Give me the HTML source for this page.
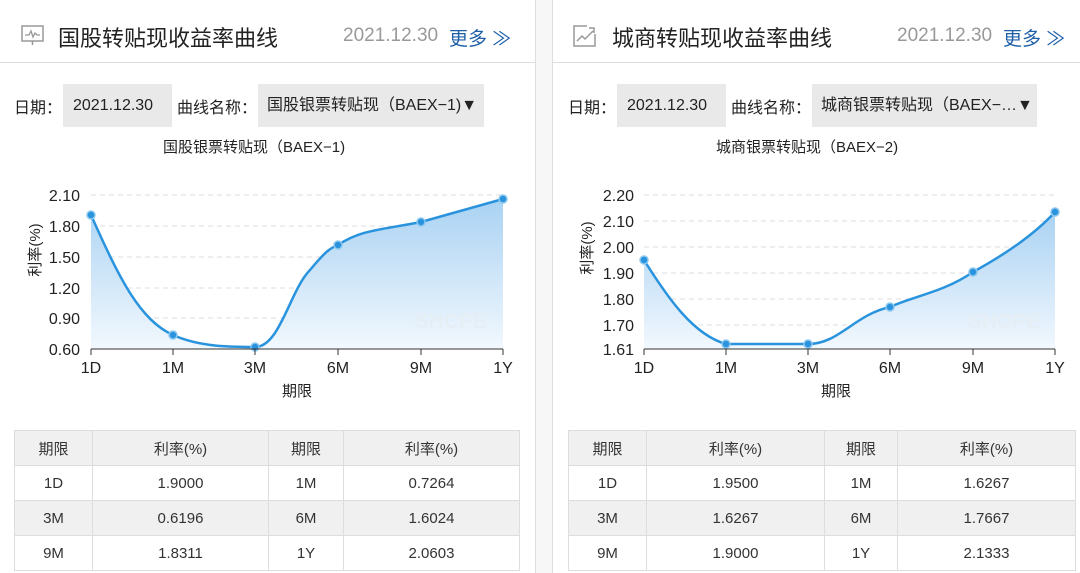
<!DOCTYPE html>
<html><head><meta charset="utf-8"><style>
*{margin:0;padding:0;box-sizing:border-box}
body{width:1080px;height:573px;background:#fff;position:relative;overflow:hidden;font-family:"Liberation Sans","Noto Sans CJK SC",sans-serif;color:#333}
.a{position:absolute;white-space:nowrap}
.title{font-size:22px;color:#222;top:21px}
.date{font-size:19px;color:#999;top:25px}
.more{font-size:19px;color:#1f5fa8;top:24px}
.box{position:absolute;background:#e9e9e9;top:84px;height:43px;font-size:16px;line-height:44px;color:#222}
.lab{font-size:16px;top:94px;color:#222}
table{position:absolute;border-collapse:collapse;font-size:15px;color:#333;top:430px}
td{border:1px solid #ddd;height:35px;text-align:center}
tr.g td{background:#f0f0f0}
</style></head><body>
<div class="a" style="left:535px;top:0;width:18px;height:573px;background:#f7f7f7;border-left:1px solid #ddd;border-right:1px solid #ddd"></div>
<div class="a" style="left:0;top:62px;width:535px;height:1px;background:#ddd"></div>
<div class="a" style="left:553px;top:62px;width:527px;height:1px;background:#ddd"></div>

<!-- left -->
<svg class="a" style="left:21px;top:25px" width="23" height="22" viewBox="0 0 23 22"><rect x="1" y="1" width="21" height="15" fill="none" stroke="#999" stroke-width="1.5"/><path d="M4 10h4l2-4 2 6 2-4 2 2h3" fill="none" stroke="#999" stroke-width="1.3"/><path d="M11.5 16v4" stroke="#999" stroke-width="1.5"/></svg>
<div class="a title" style="left:58px">国股转贴现收益率曲线</div>
<div class="a date" style="left:343px">2021.12.30</div>
<div class="a more" style="left:449px">更多 ≫</div>
<div class="a lab" style="left:14px">日期：</div>
<div class="box" style="left:63px;width:109px;padding-left:10px">2021.12.30</div>
<div class="a lab" style="left:177px">曲线名称：</div>
<div class="box" style="left:258px;width:226px;padding-left:9px">国股银票转贴现（BAEX−1)▼</div>
<div class="a" style="left:163px;top:136px;font-size:15px;color:#222">国股银票转贴现（BAEX−1)</div>

<svg class="a" style="left:0;top:170px" width="535" height="240">
<defs><linearGradient id="g" x1="0" y1="0" x2="0" y2="1"><stop offset="0" stop-color="#a9d2f3"/><stop offset="1" stop-color="#f2f8fe"/></linearGradient></defs>
<g stroke="#ddd" stroke-dasharray="5,4"><line x1="91" x2="503" y1="25" y2="25"/><line x1="91" x2="503" y1="56" y2="56"/><line x1="91" x2="503" y1="87" y2="87"/><line x1="91" x2="503" y1="118" y2="118"/><line x1="91" x2="503" y1="148" y2="148"/></g>
<path d="M91 45C120 110 140 150 173 165C200 177 230 177 255 177C280 177 290 120 310 100C325 82 330 78 338 75C360 60 380 60 421 52L503 29L503 179L91 179Z" fill="url(#g)"/>
<path d="M91 45C120 110 140 150 173 165C200 177 230 177 255 177C280 177 290 120 310 100C325 82 330 78 338 75C360 60 380 60 421 52L503 29" fill="none" stroke="#2a93dd" stroke-width="2.5"/>
<g fill="#2a93dd" stroke="#8cc8f0" stroke-width="1.5"><circle cx="91" cy="45" r="4"/><circle cx="173" cy="165" r="4"/><circle cx="255" cy="177" r="4"/><circle cx="338" cy="75" r="4"/><circle cx="421" cy="52" r="4"/><circle cx="503" cy="29" r="4"/></g>
<text x="487" y="158" font-size="21" fill="#e6eef5" text-anchor="end" font-family="Liberation Sans" font-weight="bold">SHCPE</text>
<line x1="91" x2="503" y1="179" y2="179" stroke="#333"/>
<g stroke="#333"><line x1="91" x2="91" y1="179" y2="185"/><line x1="173" x2="173" y1="179" y2="185"/><line x1="255" x2="255" y1="179" y2="185"/><line x1="338" x2="338" y1="179" y2="185"/><line x1="421" x2="421" y1="179" y2="185"/><line x1="503" x2="503" y1="179" y2="185"/></g>
<g font-size="16" fill="#222" text-anchor="end" font-family="Liberation Sans"><text x="80" y="31">2.10</text><text x="80" y="62">1.80</text><text x="80" y="93">1.50</text><text x="80" y="124">1.20</text><text x="80" y="154">0.90</text><text x="80" y="185">0.60</text></g>
<g font-size="16" fill="#222" text-anchor="middle" font-family="Liberation Sans"><text x="91" y="203">1D</text><text x="173" y="203">1M</text><text x="255" y="203">3M</text><text x="338" y="203">6M</text><text x="421" y="203">9M</text><text x="503" y="203">1Y</text></g>
<text x="297" y="226" font-size="15" fill="#222" text-anchor="middle" font-family="Noto Sans CJK SC">期限</text>
<text transform="translate(40,80) rotate(-90)" font-size="15" fill="#222" text-anchor="middle" font-family="Liberation Sans,Noto Sans CJK SC">利率(%)</text>
</svg>

<table style="left:14px;width:506px">
<tr class="g"><td style="width:78px">期限</td><td style="width:176px">利率(%)</td><td style="width:75px">期限</td><td>利率(%)</td></tr>
<tr><td>1D</td><td>1.9000</td><td>1M</td><td>0.7264</td></tr>
<tr class="g"><td>3M</td><td>0.6196</td><td>6M</td><td>1.6024</td></tr>
<tr><td>9M</td><td>1.8311</td><td>1Y</td><td>2.0603</td></tr>
</table>

<!-- right -->
<svg class="a" style="left:573px;top:25px" width="24" height="22" viewBox="0 0 24 22"><path d="M14 1H1v20h21V9" fill="none" stroke="#999" stroke-width="1.5"/><path d="M4 16l5-5 3 3 8-8" fill="none" stroke="#999" stroke-width="1.5"/><path d="M16 3h5v5" fill="none" stroke="#999" stroke-width="1.5"/></svg>
<div class="a title" style="left:612px">城商转贴现收益率曲线</div>
<div class="a date" style="left:897px">2021.12.30</div>
<div class="a more" style="left:1003px">更多 ≫</div>
<div class="a lab" style="left:568px">日期：</div>
<div class="box" style="left:617px;width:109px;padding-left:10px">2021.12.30</div>
<div class="a lab" style="left:731px">曲线名称：</div>
<div class="box" style="left:812px;width:225px;padding-left:9px">城商银票转贴现（BAEX−…▼</div>
<div class="a" style="left:716px;top:136px;font-size:15px;color:#222">城商银票转贴现（BAEX−2)</div>

<svg class="a" style="left:554px;top:170px" width="526" height="240">
<defs><linearGradient id="g2" x1="0" y1="0" x2="0" y2="1"><stop offset="0" stop-color="#a9d2f3"/><stop offset="1" stop-color="#f2f8fe"/></linearGradient></defs>
<g stroke="#ddd" stroke-dasharray="5,4"><line x1="90" x2="501" y1="25" y2="25"/><line x1="90" x2="501" y1="51" y2="51"/><line x1="90" x2="501" y1="77" y2="77"/><line x1="90" x2="501" y1="103" y2="103"/><line x1="90" x2="501" y1="129" y2="129"/><line x1="90" x2="501" y1="155" y2="155"/></g>
<path d="M90 90C115 130 140 165 172 174L254 174C285 174 300 145 336 137C360 126 390 122 419 102C450 85 480 65 501 42L501 179L90 179Z" fill="url(#g2)"/>
<path d="M90 90C115 130 140 165 172 174L254 174C285 174 300 145 336 137C360 126 390 122 419 102C450 85 480 65 501 42" fill="none" stroke="#2a93dd" stroke-width="2.5"/>
<g fill="#2a93dd" stroke="#8cc8f0" stroke-width="1.5"><circle cx="90" cy="90" r="4"/><circle cx="172" cy="174" r="4"/><circle cx="254" cy="174" r="4"/><circle cx="336" cy="137" r="4"/><circle cx="419" cy="102" r="4"/><circle cx="501" cy="42" r="4"/></g>
<text x="486" y="158" font-size="21" fill="#e6eef5" text-anchor="end" font-family="Liberation Sans" font-weight="bold">SHCPE</text>
<line x1="90" x2="501" y1="179" y2="179" stroke="#333"/>
<g stroke="#333"><line x1="90" x2="90" y1="179" y2="185"/><line x1="172" x2="172" y1="179" y2="185"/><line x1="254" x2="254" y1="179" y2="185"/><line x1="336" x2="336" y1="179" y2="185"/><line x1="419" x2="419" y1="179" y2="185"/><line x1="501" x2="501" y1="179" y2="185"/></g>
<g font-size="16" fill="#222" text-anchor="end" font-family="Liberation Sans"><text x="80" y="31">2.20</text><text x="80" y="57">2.10</text><text x="80" y="83">2.00</text><text x="80" y="109">1.90</text><text x="80" y="135">1.80</text><text x="80" y="161">1.70</text><text x="80" y="185">1.61</text></g>
<g font-size="16" fill="#222" text-anchor="middle" font-family="Liberation Sans"><text x="90" y="203">1D</text><text x="172" y="203">1M</text><text x="254" y="203">3M</text><text x="336" y="203">6M</text><text x="419" y="203">9M</text><text x="501" y="203">1Y</text></g>
<text x="282" y="226" font-size="15" fill="#222" text-anchor="middle" font-family="Noto Sans CJK SC">期限</text>
<text transform="translate(38,78) rotate(-90)" font-size="15" fill="#222" text-anchor="middle" font-family="Liberation Sans,Noto Sans CJK SC">利率(%)</text>
</svg>

<table style="left:568px;width:508px">
<tr class="g"><td style="width:78px">期限</td><td style="width:178px">利率(%)</td><td style="width:73px">期限</td><td>利率(%)</td></tr>
<tr><td>1D</td><td>1.9500</td><td>1M</td><td>1.6267</td></tr>
<tr class="g"><td>3M</td><td>1.6267</td><td>6M</td><td>1.7667</td></tr>
<tr><td>9M</td><td>1.9000</td><td>1Y</td><td>2.1333</td></tr>
</table>
</body></html>
